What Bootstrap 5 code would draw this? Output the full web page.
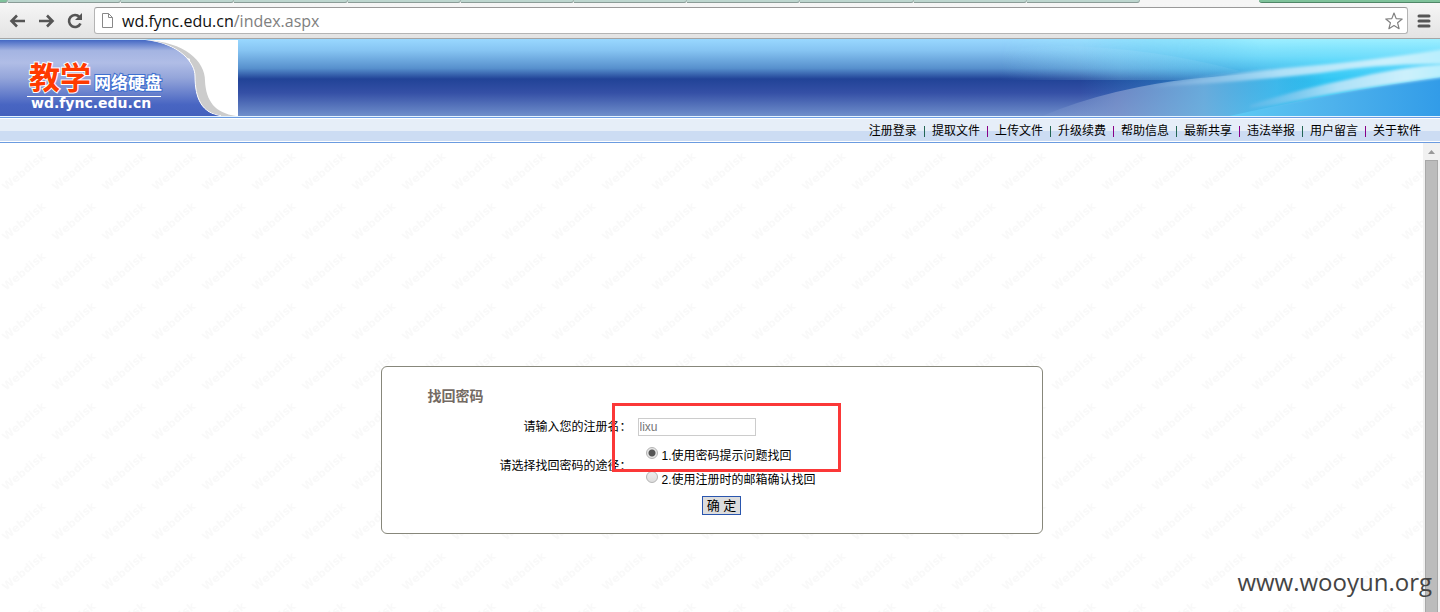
<!DOCTYPE html>
<html lang="zh-CN">
<head>
<meta charset="utf-8">
<meta name="viewport" content="width=device-width, initial-scale=1">
<title>教学网络硬盘</title>
<link href="https://cdn.jsdelivr.net/npm/bootstrap@5.3.0/dist/css/bootstrap.min.css" rel="stylesheet">
<style>
body{font:12px/18px "Liberation Sans","Noto Sans CJK SC",sans-serif;color:#000;background:#fff}
.tabstrip{height:3px;background:#f5f5f5}
.tab-item{background:#bdd6cf;border-bottom:1px solid #8a9c97;border-right:1px solid #9fb3ad;border-radius:0 0 3px 0}
.tab-first{flex:0 0 8px;background:#7fc29b}
.tab-open{flex:0 0 119px}
.tab-green{flex:0 0 181px;background:#7fc29b;border-bottom:1px solid #4f8667;border-radius:0 0 0 4px}
.toolbar{height:36px;padding:3px 8px 3px;background:linear-gradient(#f6f6f6,#e3e3e3);border-bottom:1px solid #a5a5a5}
.tool-btn{padding:0;border:0;background:none;line-height:0}
.address{height:27px;border:1px solid #b4b4b4;border-top-color:#999;border-radius:3px;background:#fff;padding:0 4px 0 5px}
.address-text{font:16px/24px "Open Sans","Noto Sans",sans-serif;color:#808080}
.address-text span{color:#111}
.banner{height:78px;border-bottom:1px solid #e4f3ff;background:linear-gradient(#99d8ff 0,#86c4f2 15%,#5790cd 38%,#214397 52%,#3550a6 70%,#6f8fcb 100%)}
.swoosh{position:absolute;right:0;top:0}
.menubar{height:26px;border-top:1px solid #6b9be0;border-bottom:1px solid #6b9be0;background:linear-gradient(#fff 0 1px,#e6eef8 1px 13px,#ccdcf3 13px 23px,#fff 23px);padding:2px 19px 0 0;gap:7px;line-height:22px}
.menubar a{color:#000;text-decoration:none}
.divider{width:1px;height:11px;background:#808}
.divider.alt{background:#265}
.paper{position:absolute;inset:0;width:100%;height:100%}
.scroll-rail{width:17px;background:#f1f1f1;padding:0 2px}
.rail-up{height:17px;padding-top:7px;line-height:0}
.thumb{background:#bcbcbc;border:1px solid #a8a8a8;border-bottom:0}
.stage{padding:223px 0 78px}
.find-box{width:662px;height:168px;border:1px solid #87877b;border-radius:6px;background:#fff;padding:19px 46px;position:relative}
.find-box h1{font-size:14px;line-height:20px;color:#746a63;font-weight:700;margin:0 0 12px}
.form-rows{display:grid;grid-template-columns:204px 1fr;column-gap:6px}
.name-input{width:118px;height:18px;border:1px solid #ccc;border-radius:0;padding:0 1px;font-size:12px;color:#777}
.way-list{padding:8px 0 0 8px}
.way-label{padding-top:4px}
.opt{height:24px}
.pick{appearance:none;width:12px;height:12px;border:1px solid #b4b4b4;border-radius:50%;background:linear-gradient(#eee,#ddd);margin:0 4px 6px 0}
.pick:checked{background:radial-gradient(circle,#555 0 3px,#e6e6e6 4px)}
.ok-row{padding:4px 0 0 20px}
.ok-btn{width:39px;height:19px;border:1px solid #2a56ae;background:#ddd;padding:0;font-size:13px;line-height:17px}
.red-frame{position:absolute;left:230px;top:36px;width:229px;height:69px;border:3px solid #fb3838;pointer-events:none}
.credit{position:absolute;right:8px;bottom:13px;font:24px/34px "Open Sans","Noto Sans",sans-serif;color:#444}
</style>
</head>
<body class="d-flex flex-column min-vh-100">
<div class="tabstrip d-flex">
  <div class="tab-item tab-first"></div>
  <div class="tab-item flex-fill"></div><div class="tab-item flex-fill"></div><div class="tab-item flex-fill"></div>
  <div class="tab-item flex-fill"></div><div class="tab-item flex-fill"></div><div class="tab-item flex-fill"></div>
  <div class="tab-item flex-fill"></div><div class="tab-item flex-fill"></div><div class="tab-item flex-fill"></div>
  <div class="tab-item flex-fill"></div>
  <div class="tab-open"></div>
  <div class="tab-green"></div>
</div>
<div class="toolbar d-flex align-items-center">
  <button class="tool-btn me-2" type="button" aria-label="后退"><svg width="20" height="18" viewBox="0 0 20 18" fill="none" stroke="#555" stroke-width="2.600"><path d="M17 9H4M9 3.500L3.500 9L9 14.500"/></svg></button>
  <button class="tool-btn me-2" type="button" aria-label="前进"><svg width="20" height="18" viewBox="0 0 20 18" fill="none" stroke="#555" stroke-width="2.600"><path d="M3 9H16M11 3.500L16.500 9L11 14.500"/></svg></button>
  <button class="tool-btn me-2" type="button" aria-label="刷新"><svg width="22" height="18" viewBox="0 0 22 18"><path d="M15.500 5A6 6 0 1 0 16.500 11.500" fill="none" stroke="#555" stroke-width="2.600"/><path d="M18 1V8H11Z" fill="#555"/></svg></button>
  <div class="address d-flex align-items-center flex-grow-1">
    <svg class="me-1" width="14" height="17" viewBox="0 0 14 17" fill="#fff" stroke="#888"><path d="M2.500 1.500H8.500L12.500 5.500V15.500H2.500ZM8.500 1.500V5.500H12.500"/></svg>
    <div class="address-text flex-grow-1 ps-1"><span>wd.fync.edu.cn</span>/index.aspx</div>
    <svg width="18" height="18" viewBox="0 0 18 18" fill="#fff" stroke="#808080" stroke-width="1.200" stroke-linejoin="round"><path d="M9 1L11.200 6.600L17.200 7L12.600 10.800L14.100 16.700L9 13.500L3.900 16.700L5.400 10.800L.8 7L6.800 6.600Z"/></svg>
  </div>
  <button class="tool-btn ms-2" type="button" aria-label="菜单"><svg width="16" height="16" viewBox="0 0 16 16" stroke="#555" stroke-width="3" stroke-linecap="round"><path d="M3 3H13M3 8H13M3 13H13"/></svg></button>
</div>
<header class="banner position-relative overflow-hidden">
  <svg class="swoosh" width="440" height="78" viewBox="0 0 440 78">
    <defs>
      <linearGradient id="cy" x1="0" x2="1"><stop offset="0" stop-color="#30b4ea" stop-opacity="0"/><stop offset=".4" stop-color="#30b4ea" stop-opacity=".55"/><stop offset=".68" stop-color="#30ccf8" stop-opacity=".95"/><stop offset="1" stop-color="#40ccfa"/></linearGradient>
      <linearGradient id="tpf" x1="0" x2="1"><stop offset="0" stop-color="#fff" stop-opacity="0"/><stop offset=".6" stop-color="#fff"/></linearGradient>
      <mask id="tpm"><rect width="440" height="78" fill="url(#tpf)"/></mask>
      <linearGradient id="tp" x1="0" x2="0" y1="0" y2="1"><stop offset="0" stop-color="#9deeff"/><stop offset=".4" stop-color="#80e2fc" stop-opacity=".8"/><stop offset="1" stop-color="#60d8fa" stop-opacity="0"/></linearGradient>
      <linearGradient id="lo" gradientUnits="userSpaceOnUse" x1="30" y1="0" x2="320" y2="0"><stop offset="0" stop-color="#7f9bd0" stop-opacity=".1"/><stop offset=".3" stop-color="#7e94cb" stop-opacity=".8"/><stop offset=".6" stop-color="#6fb0de" stop-opacity=".9"/><stop offset=".85" stop-color="#48c6f4" stop-opacity=".6"/><stop offset="1" stop-color="#30ccf8" stop-opacity="0"/></linearGradient>
      <linearGradient id="ar" x1="0" x2="1"><stop offset="0" stop-color="#a0dcfa" stop-opacity="0"/><stop offset=".5" stop-color="#a0dcfa" stop-opacity=".25"/><stop offset="1" stop-color="#a0dcfa" stop-opacity=".1"/></linearGradient>
      <linearGradient id="wh" x1="0" x2="1"><stop offset="0" stop-color="#a4c4ea" stop-opacity=".2"/><stop offset=".45" stop-color="#bce4f8" stop-opacity=".9"/><stop offset=".8" stop-color="#ccf0fc"/><stop offset="1" stop-color="#b8effd"/></linearGradient>
      <linearGradient id="bl" x1="0" x2="1"><stop offset="0" stop-color="#5ecbf4"/><stop offset=".5" stop-color="#4eb2ec"/><stop offset="1" stop-color="#329ce8"/></linearGradient>
      <filter id="soft" x="-5%" y="-20%" width="110%" height="140%"><feGaussianBlur stdDeviation="1.400"/></filter>
    </defs>
    <rect x="80" width="360" height="78" fill="url(#cy)"/>
    <rect width="440" height="42" fill="url(#tp)" mask="url(#tpm)"/>
    <path d="M60 7Q150 8 240 32L190 41H0V10Z" fill="url(#ar)"/>
    <path d="M40 78Q110 48 200 39L330 28L440 18V78Z" fill="url(#lo)"/>
    <path d="M150 48Q220 34 330 25Q390 19 445 10V25Q380 24 320 34Q230 44 150 48" fill="url(#wh)" filter="url(#soft)"/>
    <path d="M225 78Q330 54 440 38V78Z" fill="url(#bl)"/>
    <path d="M250 66Q300 50 350 40Q400 28 445 25V38Q350 50 300 61Q270 67 250 69Z" fill="url(#wh)" filter="url(#soft)"/>
  </svg>
  <svg class="position-relative d-block" width="238" height="78" viewBox="0 0 238 78">
    <defs><linearGradient id="lg" x1="0" x2="0" y1="0" y2="1"><stop offset="0" stop-color="#4468c4"/><stop offset=".14" stop-color="#a4b4e2"/><stop offset=".3" stop-color="#b0bde6"/><stop offset=".5" stop-color="#94a5da"/><stop offset=".85" stop-color="#4865c2"/><stop offset="1" stop-color="#4461bd"/></linearGradient></defs>
    <rect y="1" width="238" height="77" fill="#fff"/>
    <path d="M145 1C185 3 205 22 205 42C206 62 215 74 236 77H190V20Z" fill="#ccc"/>
    <path d="M0 1H145C182 5 195 25 195 37C195 60 202 74 221 77H0Z" fill="url(#lg)" stroke="#fff"/>
    <path d="M0 1H145C181 5 194 25 194 37C194 60 201 74 220 77H0Z" fill="url(#lg)"/>
    <text x="29" y="50" font-family="Noto Sans CJK SC,sans-serif" font-weight="700" font-size="31" fill="#ff3a00" stroke="#fff" stroke-width="2" paint-order="stroke">教学</text>
    <text x="94" y="50" font-family="Noto Sans CJK SC,sans-serif" font-weight="700" font-size="17" fill="#fff" stroke="#3e6fd0" stroke-width="2" paint-order="stroke">网络硬盘</text>
    <rect x="27" y="57" width="134" height="1" fill="#fff"/>
    <text x="31" y="69" font-family="DejaVu Sans,sans-serif" font-weight="700" font-size="14" fill="#fff">wd.fync.edu.cn</text>
  </svg>
</header>
<nav class="menubar d-flex justify-content-end align-items-center">
  <a href="#">注册登录</a><i class="divider alt"></i><a href="#">提取文件</a><i class="divider"></i><a href="#">上传文件</a><i class="divider alt"></i><a href="#">升级续费</a><i class="divider"></i><a href="#">帮助信息</a><i class="divider alt"></i><a href="#">最新共享</a><i class="divider"></i><a href="#">违法举报</a><i class="divider alt"></i><a href="#">用户留言</a><i class="divider"></i><a href="#">关于软件</a>
</nav>
<div class="d-flex flex-grow-1 position-relative">
  <main class="flex-grow-1 position-relative">
    <svg class="paper" aria-hidden="true"><defs><pattern id="wm" width="50" height="50" patternUnits="userSpaceOnUse"><text transform="translate(6 48) rotate(-40)" font-family="DejaVu Sans,sans-serif" font-weight="700" font-size="11" fill="#f9f9f9">Webdisk</text></pattern></defs><rect width="100%" height="100%" fill="url(#wm)"/></svg>
    <div class="stage d-flex justify-content-center position-relative">
      <form class="find-box">
        <h1>找回密码</h1>
        <div class="form-rows">
          <label class="text-end" for="uname">请输入您的注册名：</label>
          <div><input class="name-input d-block" id="uname" type="text" value="lixu"></div>
        </div>
        <div class="form-rows align-items-center">
          <span class="way-label text-end">请选择找回密码的途径：</span>
          <div class="way-list">
            <div class="d-flex align-items-center opt"><input class="pick" type="radio" name="way" id="w1" checked><label for="w1">1.使用密码提示问题找回</label></div>
            <div class="d-flex align-items-center opt"><input class="pick" type="radio" name="way" id="w2"><label for="w2">2.使用注册时的邮箱确认找回</label></div>
          </div>
        </div>
        <div class="ok-row text-center"><button class="ok-btn" type="submit">确 定</button></div>
        <div class="red-frame"></div>
      </form>
    </div>
  </main>
  <div class="scroll-rail d-flex flex-column" aria-hidden="true">
    <div class="rail-up text-center"><svg width="7" height="4"><path d="M0 4L3.500 0L7 4Z" fill="#999"/></svg></div>
    <div class="thumb flex-grow-1"></div>
  </div>
  <div class="credit">www.wooyun.org</div>
</div>
<script src="https://cdn.jsdelivr.net/npm/bootstrap@5.3.0/dist/js/bootstrap.bundle.min.js"></script>
</body>
</html>
